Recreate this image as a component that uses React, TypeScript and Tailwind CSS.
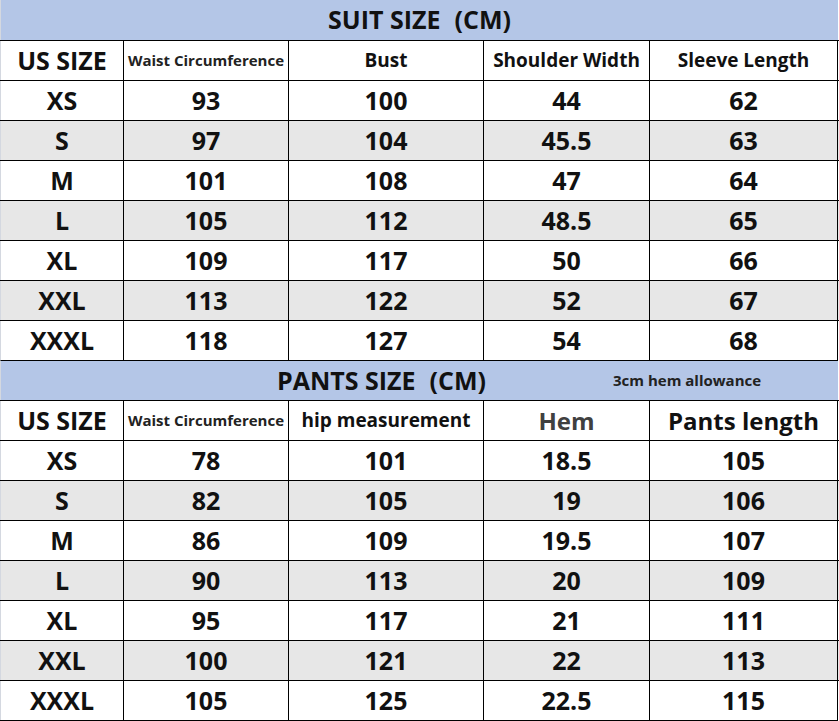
import React from "react";

const widths = ["w-[123px]", "w-[165px]", "w-[195px]", "w-[166px]", "w-[189px]"];

const suitRows = [
  ["XS", "93", "100", "44", "62"],
  ["S", "97", "104", "45.5", "63"],
  ["M", "101", "108", "47", "64"],
  ["L", "105", "112", "48.5", "65"],
  ["XL", "109", "117", "50", "66"],
  ["XXL", "113", "122", "52", "67"],
  ["XXXL", "118", "127", "54", "68"],
];

const pantsRows = [
  ["XS", "78", "101", "18.5", "105"],
  ["S", "82", "105", "19", "106"],
  ["M", "86", "109", "19.5", "107"],
  ["L", "90", "113", "20", "109"],
  ["XL", "95", "117", "21", "111"],
  ["XXL", "100", "121", "22", "113"],
  ["XXXL", "105", "125", "22.5", "115"],
];

function Cell({ i, children, className = "" }: { i: number; children: React.ReactNode; className?: string }) {
  const border = i === 0 ? "border-l border-l-[#d4d8e0]" : i === 4 ? "border-l border-r border-black" : "border-l border-black";
  return (
    <div className={`${widths[i]} ${border} h-full flex items-center justify-center whitespace-nowrap ${className}`}>
      {children}
    </div>
  );
}

function DataRow({ row, gray }: { row: string[]; gray: boolean }) {
  return (
    <div className={`flex h-[40px] border-t border-black ${gray ? "bg-[#e7e7e7]" : "bg-white"}`}>
      {row.map((v, i) => (
        <Cell key={i} i={i} className="text-[25px] font-bold text-[#111]">
          {v}
        </Cell>
      ))}
    </div>
  );
}

export default function App() {
  return (
    <div className="w-[839px] h-[721px] bg-white text-[#111]" style={{ fontFamily: '"Open Sans", "Noto Sans", sans-serif' }}>
      {/* SUIT */}
      <div className="w-[838px] h-[40px] bg-[#b4c6e7] flex items-center justify-center text-[25px] font-bold border-l border-l-[#d4d8e0]">
        <span>SUIT SIZE</span>
        <span className="ml-[14px]">(CM)</span>
      </div>
      <div className="flex h-[40px] border-t border-black bg-white font-bold">
        <Cell i={0} className="text-[25px]">US SIZE</Cell>
        <Cell i={1} className="text-[15px] text-[#222]">Waist Circumference</Cell>
        <Cell i={2} className="text-[19px]">Bust</Cell>
        <Cell i={3} className="text-[19px]">Shoulder Width</Cell>
        <Cell i={4} className="text-[19px]">Sleeve Length</Cell>
      </div>
      {suitRows.map((r, idx) => (
        <DataRow key={r[0]} row={r} gray={idx % 2 === 1} />
      ))}
      {/* PANTS */}
      <div className="w-[838px] h-[40px] bg-[#b4c6e7] flex items-center border-t border-black border-l border-l-[#d4d8e0] font-bold">
        <div className="w-[612px] flex justify-end pr-[127px] text-[25px]">
          <span>PANTS SIZE</span>
          <span className="ml-[14px]">(CM)</span>
        </div>
        <div className="text-[15px] text-[#222]">3cm hem allowance</div>
      </div>
      <div className="flex h-[40px] border-t border-black bg-white font-bold">
        <Cell i={0} className="text-[25px]">US SIZE</Cell>
        <Cell i={1} className="text-[15px] text-[#222]">Waist Circumference</Cell>
        <Cell i={2} className="text-[19px]">hip measurement</Cell>
        <Cell i={3} className="text-[24px] text-[#404040]">Hem</Cell>
        <Cell i={4} className="text-[24px]">Pants length</Cell>
      </div>
      {pantsRows.map((r, idx) => (
        <DataRow key={r[0]} row={r} gray={idx % 2 === 1} />
      ))}
      <div className="w-[838px] border-t border-black" />
    </div>
  );
}
